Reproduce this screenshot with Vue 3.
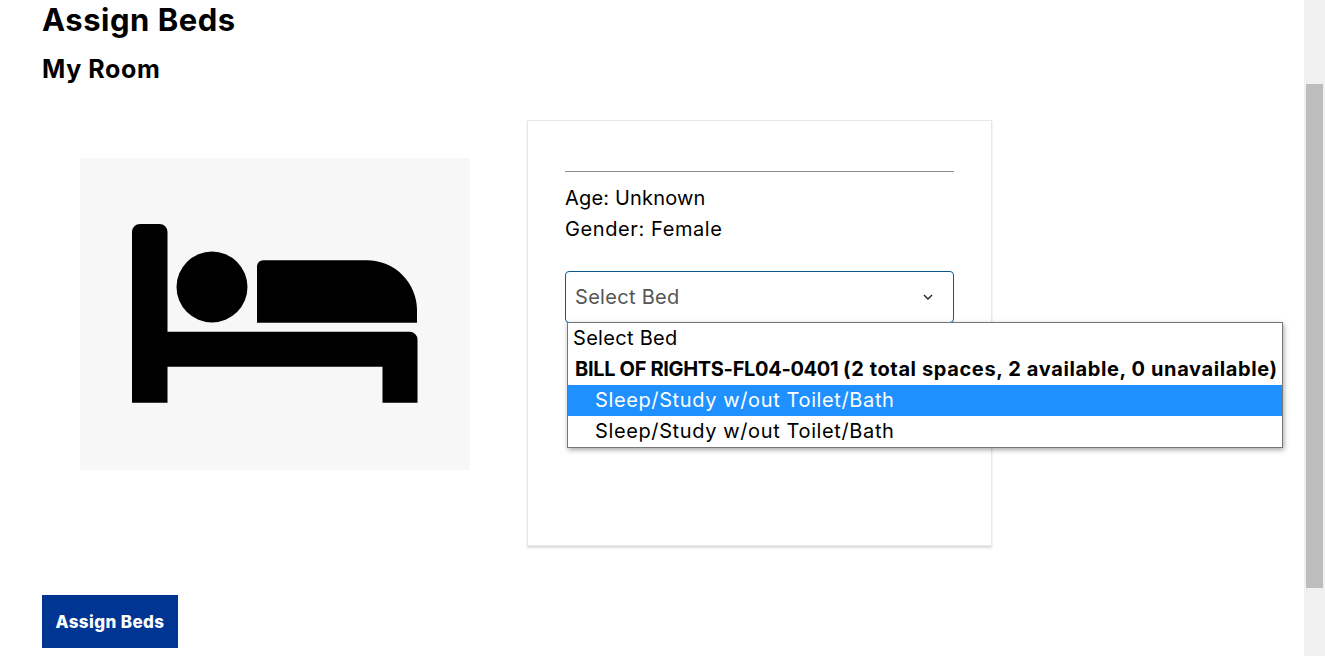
<script setup>
const options = [
  { label: 'Sleep/Study w/out Toilet/Bath', active: true },
  { label: 'Sleep/Study w/out Toilet/Bath', active: false },
]
</script>

<template>
  <div class="page">
    <main class="main">
      <h1 class="title">Assign Beds</h1>
      <h2 class="subtitle">My Room</h2>
      <div class="row">
        <div class="photo">
          <svg class="bed" width="390" height="312" viewBox="0 0 390 312">
            <path d="M52 74a8 8 0 0 1 8-8h19.500a8 8 0 0 1 8 8v99.700h242a8 8 0 0 1 8 8v63h-35v-36H87.500v36H52z" fill="#000" />
            <circle cx="132" cy="129" r="35.500" fill="#000" />
            <path d="M177 108.500a6.200 6.200 0 0 1 6.200-6.200h103.800a50 50 0 0 1 50 50v12.500H177z" fill="#000" />
          </svg>
        </div>
        <section class="card">
          <hr class="rule" />
          <p class="info age">Age: Unknown</p>
          <p class="info gender">Gender: Female</p>
          <div class="select-wrap">
            <div class="select">
              <span>Select Bed</span>
              <svg width="12" height="12" viewBox="0 0 12 12" class="chev">
                <path d="M2 4l4 4 4-4" fill="none" stroke="#222" stroke-width="1.400" />
              </svg>
            </div>
            <div class="dropdown">
              <div class="opt first">Select Bed</div>
              <div class="group"><span class="code">BILL OF RIGHTS-FL04-0401</span> <span class="counts">(2 total spaces, 2 available, 0 unavailable)</span></div>
              <div
                v-for="(o, i) in options"
                :key="i"
                class="opt child"
                :class="{ active: o.active }"
              >{{ o.label }}</div>
            </div>
          </div>
        </section>
      </div>
      <button class="assign">Assign Beds</button>
    </main>
    <div class="scrollbar"><div class="thumb"></div></div>
  </div>
</template>

<style>
html, body { margin: 0; overflow: hidden; background: #fff; }
</style>

<style scoped>
.page {
  display: flex;
  height: 656px;
  font-family: Inter, "Liberation Sans", sans-serif;
  color: #000;
  overflow: hidden;
}
.main { flex: 1; padding-left: 42px; min-width: 0; }
.title { margin: 0; font-size: 31px; line-height: 39px; font-weight: 700; letter-spacing: .5px; }
.subtitle { margin: 10px 0 0; font-size: 25px; line-height: 41px; font-weight: 700; letter-spacing: .6px; }
.row { display: flex; align-items: flex-start; margin-top: 30px; }
.photo { margin: 38px 0 0 38px; width: 390px; height: 312px; background: #f7f7f7; }
.bed { display: block; }
.card {
  margin-left: 57px;
  width: 465px;
  height: 426px;
  box-sizing: border-box;
  padding: 50px 37px 0;
  border: 1px solid #e8e8e8;
  box-shadow: 0 2px 2px rgba(0, 0, 0, .14);
  background: #fff;
}
.rule { margin: 0 0 11px; border: 0; border-top: 1px solid #8f8f8f; }
.info { margin: 0; font-size: 20px; line-height: 31px; }
.age { letter-spacing: .17px; }
.gender { letter-spacing: .6px; }
.select-wrap { position: relative; margin-top: 26px; }
.select {
  height: 52px;
  box-sizing: border-box;
  border: 1px solid #0c5a8c;
  border-radius: 4px;
  padding: 0 19px 0 9px;
  display: flex;
  align-items: center;
  justify-content: space-between;
  font-size: 20px;
  letter-spacing: .3px;
  color: #555;
}
.chev { display: block; }
.dropdown {
  position: absolute;
  left: 2px;
  top: 51px;
  width: 716px;
  box-sizing: border-box;
  border: 1px solid #767676;
  background: #fff;
  box-shadow: 1px 2px 5px rgba(0, 0, 0, .35);
  font-size: 20px;
  line-height: 31px;
  white-space: nowrap;
}
.opt { height: 31px; padding-left: 5px; letter-spacing: .3px; }
.group { height: 31px; padding-left: 7px; font-weight: 700; }
.code { letter-spacing: -.33px; }
.counts { letter-spacing: .62px; }
.child { padding-left: 27px; letter-spacing: .62px; }
.active { background: #1e90ff; color: #fff; }
.assign {
  display: block;
  margin-top: 49px;
  width: 136px;
  height: 53px;
  border: 0;
  padding: 0;
  background: #003594;
  color: #fff;
  font: 800 17px Inter, "Liberation Sans", sans-serif;
  letter-spacing: .4px;
}
.scrollbar { width: 21px; flex: none; background: #f0f0f0; padding-top: 84px; box-sizing: border-box; }
.thumb { margin-left: 2px; width: 17px; height: 504px; background: #bdbdbd; }
</style>
